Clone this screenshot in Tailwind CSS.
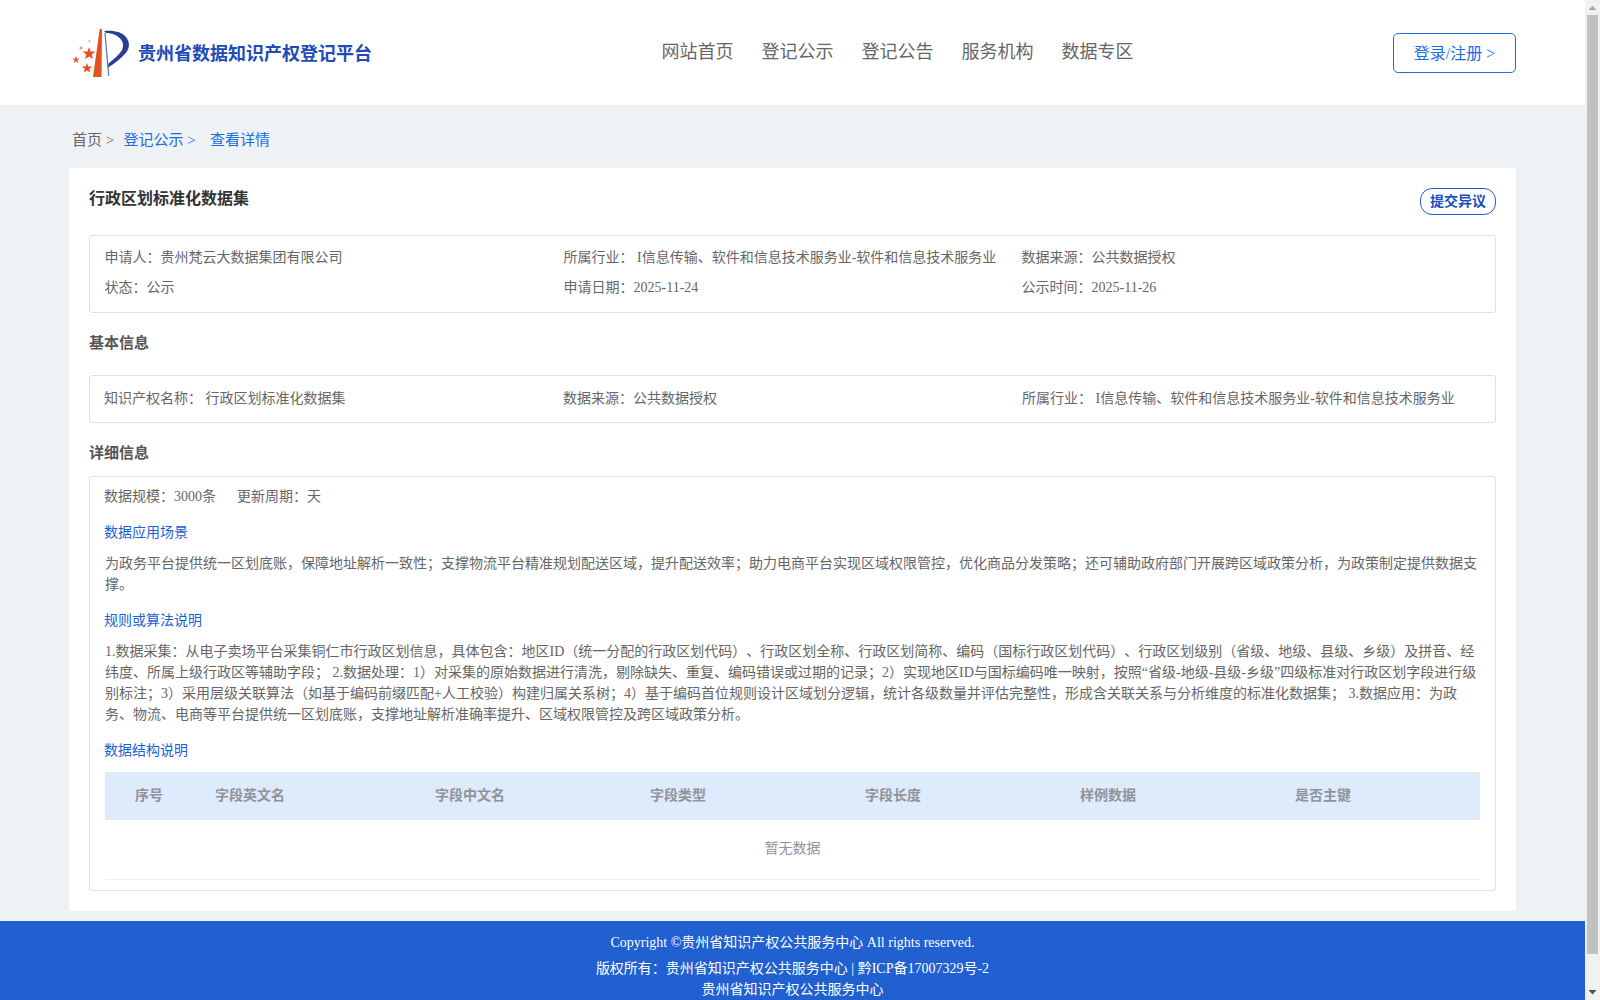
<!DOCTYPE html>
<html lang="zh-CN">
<head>
    <title>贵州省数据知识产权登记平台</title>
    <meta charset="UTF-8" />
    <script src="https://cdn.jsdelivr.net/npm/@tailwindcss/browser@4"></script>
</head>
<body class="h-screen overflow-hidden flex bg-[#eff2f5] text-[14px] leading-[21px] text-[#666] [text-spacing-trim:space-all] font-['Liberation_Serif','Noto_Sans_CJK_SC',serif]">

    <div class="w-[1585px] h-[1000px] overflow-hidden flex flex-col shrink-0">

        <!-- Header -->
        <header class="h-[105px] shrink-0 bg-white flex items-center pl-[72px] pr-[69px]">
            <div class="flex items-center w-[300px]">
                <svg class="w-[66px] h-[56px] shrink-0 mt-[1px]" viewBox="0 0 66 56">
                    <path d="M32 6 C42 5 50 7 54 12 C58 17 58.5 24 52 30 C47 35 42 39 36 42.5 L36.5 38.5 C41 35 47 30 50 25 C52 20 51 16 47 12.5 C43 9 39 8 34 8 Z" fill="#2a3f94"/>
                    <path d="M33 8 L36.7 51" stroke="#2a3f94" stroke-width="1.2" opacity="0.75" fill="none"/>
                    <path d="M27.7 4 L30 4 L29.5 52 L21 52 Z" fill="#e2521f"/>
                    <path d="M17 22 L18.6 26.4 L23.5 26.6 L19.7 29.5 L21 34 L17 31.4 L13 34 L14.3 29.5 L10.5 26.6 L15.4 26.4 Z" fill="#e2521f"/>
                    <path d="M15 38 L16.3 41.4 L20.2 41.6 L17.2 44 L18.2 47.6 L15 45.5 L11.8 47.6 L12.8 44 L9.8 41.6 L13.7 41.4 Z" fill="#e2521f"/>
                    <path d="M4 31 L5 33.5 L7.6 33.7 L5.6 35.3 L6.2 38 L4 36.6 L1.8 38 L2.4 35.3 L0.4 33.7 L3 33.5 Z" fill="#e8603a"/>
                    <circle cx="9" cy="23" r="1.6" fill="#ee9a78"/>
                    <circle cx="17.5" cy="16" r="1.2" fill="#f0b49c"/>
                </svg>
                <span class="text-[18px] font-bold text-[#1f4bb8] whitespace-nowrap mt-[4px]">贵州省数据知识产权登记平台</span>
            </div>
            <nav class="flex gap-[28px] ml-[289.5px] text-[18px] text-[#666] -mt-[1px]">
                <a>网站首页</a>
                <a>登记公示</a>
                <a>登记公告</a>
                <a>服务机构</a>
                <a>数据专区</a>
            </nav>
            <button class="ml-auto w-[123px] h-[40px] rounded-[5px] border border-[#1a6ce8] text-[16px] text-[#1a6ce8] mt-[1px]">登录/注册 &gt;</button>
        </header>

        <!-- Breadcrumb -->
        <div class="h-[63px] shrink-0 pl-[72px] pt-[7px] flex items-center text-[15px]">
            <span class="w-[51.5px]">首页 &gt;</span>
            <span class="w-[86.5px] text-[#1a6ce8]">登记公示 &gt;</span>
            <span class="text-[#1a6ce8]">查看详情</span>
        </div>

        <!-- Card -->
        <main class="ml-[69px] w-[1447px] h-[743px] shrink-0 bg-white px-[20px] pt-[20px]">
            <div class="flex justify-between items-start h-[27px]">
                <h1 class="text-[16px] leading-[22px] font-bold text-[#333]">行政区划标准化数据集</h1>
                <button class="w-[76px] h-[27px] rounded-[12px] border border-[#1f5fd0] text-[14px] font-bold text-[#1a4fc0]">提交异议</button>
            </div>

            <div class="mt-[20px] h-[78px] border border-[#e0e0e0] rounded-[3px] pl-[14.5px] pt-[6px] grid grid-cols-[459px_458px_1fr] auto-rows-[30px] items-center">
                <div>申请人：贵州梵云大数据集团有限公司</div>
                <div>所属行业： I信息传输、软件和信息技术服务业-软件和信息技术服务业</div>
                <div>数据来源：公共数据授权</div>
                <div>状态：公示</div>
                <div>申请日期：2025-11-24</div>
                <div>公示时间：2025-11-26</div>
            </div>

            <div class="h-[62px] pb-[2px] flex items-center text-[15px] font-bold text-[#555]">基本信息</div>

            <div class="h-[48px] border border-[#e0e0e0] rounded-[3px] pl-[14px] pb-[1px] grid grid-cols-[459px_459px_1fr] items-center">
                <div>知识产权名称： 行政区划标准化数据集</div>
                <div>数据来源：公共数据授权</div>
                <div>所属行业： I信息传输、软件和信息技术服务业-软件和信息技术服务业</div>
            </div>

            <div class="h-[53px] pt-[7px] flex items-center text-[15px] font-bold text-[#555]">详细信息</div>

            <div class="h-[415px] border border-[#e0e0e0] rounded-[3px] px-[15px] pt-[9px]">
                <div class="flex gap-[21px] -ml-[1px]">
                    <span>数据规模：3000条</span>
                    <span>更新周期：天</span>
                </div>

                <h3 class="mt-[15px] -ml-[1px] text-[#1a5fd8]">数据应用场景</h3>
                <p class="mt-[10px]">为政务平台提供统一区划底账，保障地址解析一致性；支撑物流平台精准规划配送区域，提升配送效率；助力电商平台实现区域权限管控，优化商品分发策略；还可辅助政府部门开展跨区域政策分析，为政策制定提供数据支撑。</p>

                <h3 class="mt-[15px] -ml-[1px] text-[#1a5fd8]">规则或算法说明</h3>
                <p class="mt-[10px]">1.数据采集：从电子卖场平台采集铜仁市行政区划信息，具体包含：地区ID（统一分配的行政区划代码）、行政区划全称、行政区划简称、编码（国标行政区划代码）、行政区划级别（省级、地级、县级、乡级）及拼音、经纬度、所属上级行政区等辅助字段； 2.数据处理：1）对采集的原始数据进行清洗，剔除缺失、重复、编码错误或过期的记录；2）实现地区ID与国标编码唯一映射，按照“省级-地级-县级-乡级”四级标准对行政区划字段进行级别标注；3）采用层级关联算法（如基于编码前缀匹配+人工校验）构建归属关系树；4）基于编码首位规则设计区域划分逻辑，统计各级数量并评估完整性，形成含关联关系与分析维度的标准化数据集； 3.数据应用：为政务、物流、电商等平台提供统一区划底账，支撑地址解析准确率提升、区域权限管控及跨区域政策分析。</p>

                <h3 class="mt-[15px] -ml-[1px] text-[#1a5fd8]">数据结构说明</h3>

                <div class="mt-[11px] h-[48px] pb-[1px] bg-[#deebfc] grid grid-cols-[110px_220px_215px_215px_215px_215px_1fr] items-center font-bold text-[#909399]">
                    <div class="pl-[30px]">序号</div>
                    <div>字段英文名</div>
                    <div>字段中文名</div>
                    <div>字段类型</div>
                    <div>字段长度</div>
                    <div>样例数据</div>
                    <div>是否主键</div>
                </div>
                <div class="h-[60px] pb-[2px] border-b border-[#ebeef5] flex items-center justify-center text-[#909399]">暂无数据</div>
            </div>
        </main>

        <!-- Footer -->
        <footer class="mt-[10px] flex-1 bg-[#2060d0] text-white text-center pt-[11px]">
            <div>Copyright ©贵州省知识产权公共服务中心 All rights reserved.</div>
            <div class="mt-[5px]">版权所有：贵州省知识产权公共服务中心 | 黔ICP备17007329号-2</div>
            <div>贵州省知识产权公共服务中心</div>
        </footer>
    </div>

    <!-- Scrollbar -->
    <div class="w-[15px] h-[1000px] shrink-0 bg-[#f1f1f1] flex flex-col items-center">
        <svg class="w-[15px] h-[15px] shrink-0" viewBox="0 0 15 15"><path d="M3.5 10 L7.5 6 L11.5 10 Z" fill="#a3a3a3"/></svg>
        <div class="w-[11px] h-[939px] bg-[#c1c1c1]"></div>
        <div class="flex-1"></div>
        <svg class="w-[15px] h-[15px] shrink-0" viewBox="0 0 15 15"><path d="M3.5 5 L11.5 5 L7.5 9.5 Z" fill="#505050"/></svg>
    </div>

</body>
</html>
